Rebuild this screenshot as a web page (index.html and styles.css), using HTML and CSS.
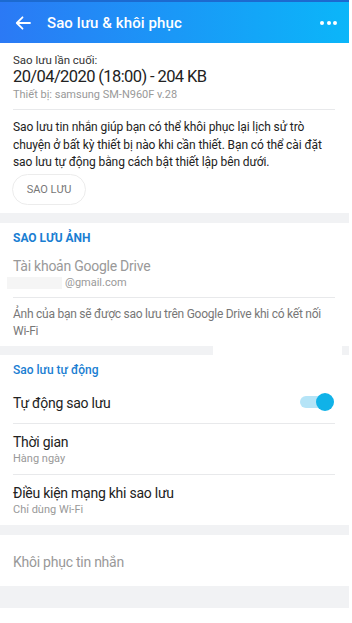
FILE: index.html
```html
<!DOCTYPE html>
<html lang="vi">
<head>
<meta charset="utf-8">
<link rel="stylesheet" href="styles.css">
</head>
<body>
<div class="app">
  <header class="topbar">
    <svg class="back" width="16" height="14" viewBox="0 0 16 14"><path d="M15 7H2M7.5 1.3L1.8 7l5.7 5.7" fill="none" stroke="#fff" stroke-width="1.8" stroke-linecap="round" stroke-linejoin="round"/></svg>
    <div class="title">Sao lưu &amp; khôi phục</div>
    <div class="dots"><span></span><span></span><span></span></div>
  </header>

  <section class="card first">
    <div class="last-label">Sao lưu lần cuối:</div>
    <div class="last-date">20/04/2020 (18:00) - 204 KB</div>
    <div class="device">Thiết bị: samsung SM-N960F v.28</div>
    <div class="divider"></div>
    <p class="intro">Sao lưu tin nhắn giúp bạn có thể khôi phục lại lịch sử trò chuyện ở bất kỳ thiết bị nào khi cần thiết. Bạn có thể cài đặt sao lưu tự động bằng cách bật thiết lập bên dưới.</p>
    <div class="btn">SAO LƯU</div>
  </section>

  <div class="sep"></div>

  <section class="card photos">
    <div class="heading caps">SAO LƯU ẢNH</div>
    <div class="item-title muted">Tài khoản Google Drive</div>
    <div class="item-sub"><span class="mask"></span>@gmail.com</div>
    <div class="divider d2"></div>
    <p class="note">Ảnh của bạn sẽ được sao lưu trên Google Drive khi có kết nối Wi-Fi</p>
  </section>

  <div class="sep sep-patch"></div>

  <section class="card auto">
    <div class="heading">Sao lưu tự động</div>
    <div class="row toggle-row">
      <div class="item-title">Tự động sao lưu</div>
      <div class="switch"><span class="knob"></span></div>
    </div>
    <div class="divider"></div>
    <div class="row stack">
      <div class="item-title">Thời gian</div>
      <div class="item-sub">Hàng ngày</div>
    </div>
    <div class="divider"></div>
    <div class="row stack">
      <div class="item-title">Điều kiện mạng khi sao lưu</div>
      <div class="item-sub">Chỉ dùng Wi-Fi</div>
    </div>
  </section>

  <div class="sep"></div>

  <section class="card restore">
    <div class="item-title muted">Khôi phục tin nhắn</div>
  </section>

  <div class="footer-band"></div>
</div>
</body>
</html>
```

FILE: styles.css
```css
* { box-sizing: border-box; }
html, body { margin: 0; padding: 0; background: #fff; }
body { font-family: Roboto, "Noto Sans", Arial, sans-serif; color: #222; }
.app { width: 349px; min-height: 623px; background: #fff; }

.topbar {
  height: 43px;
  display: flex;
  align-items: center;
  background: linear-gradient(90deg, #2b79f5 0%, #1a98f7 50%, #0bb6f9 100%);
  border-top: 2px solid #1c6ad0;
  padding: 0 12px 0 15px;
}
.back { flex: none; }
.title {
  color: #fff;
  font-size: 15px;
  font-weight: 500;
  margin-left: 16px;
  flex: 1;
  letter-spacing: 0.1px;
}
.dots { display: flex; gap: 2.5px; }
.dots span { width: 4px; height: 4px; border-radius: 50%; background: #fff; display: block; }

.card { padding: 0 14px 0 13px; background: #fff; }
.first { padding-top: 9px; padding-bottom: 8px; }
.last-label { font-size: 11.5px; line-height: 16px; color: #333; }
.last-date { font-size: 16.5px; line-height: 20px; color: #222; margin-top: -1px; letter-spacing: -0.6px; }
.device { font-size: 11px; line-height: 14px; color: #999; margin-top: 1px; }
.divider { height: 1px; background: #e8e9eb; }
.first .divider { margin-top: 7px; }
.intro { margin: 9px 0 0; font-size: 12px; line-height: 17.5px; color: #222; letter-spacing: -0.1px; }
.btn {
  width: 74px;
  height: 31px;
  margin-top: 2px;
  margin-left: -1px;
  border: 1px solid #ececec;
  border-radius: 16px;
  display: flex;
  align-items: center;
  justify-content: center;
  font-size: 11px;
  color: #777;
}

.sep { height: 10px; background: #f1f2f4; }
.sep-patch {
  height: 9px;
  background: linear-gradient(90deg, #f1f2f4 0, #f1f2f4 213px, #fff 213px, #fff 342px, #f1f2f4 342px);
}

.photos { padding-top: 7px; padding-bottom: 6px; }
.heading { font-size: 12px; line-height: 16px; color: #1a7ed2; font-weight: 500; }
.heading.caps { font-weight: 700; }
.item-title { font-size: 14px; line-height: 20px; color: #222; letter-spacing: -0.25px; }
.item-title.muted { color: #999; }
.photos .item-title { margin-top: 10px; }
.item-sub { font-size: 11px; line-height: 14px; color: #999; display: flex; align-items: center; }
.mask { display: inline-block; width: 55px; height: 12px; background: #f5f5f5; margin-left: -6px; margin-right: 3px; }
.d2 { margin-top: 7px; }
.note { margin: 8px 0 0; font-size: 12px; line-height: 17px; color: #777; letter-spacing: -0.25px; }

.auto { padding-top: 7px; padding-bottom: 8px; }
.row.toggle-row {
  display: flex;
  align-items: center;
  justify-content: space-between;
  padding: 15px 0 10px;
}
.switch {
  width: 33px;
  height: 12px;
  border-radius: 6px;
  background: #b5e4f7;
  position: relative;
  margin-right: 2px;
  margin-top: -2px;
}
.knob {
  position: absolute;
  right: -1px;
  top: -3px;
  width: 18px;
  height: 18px;
  border-radius: 50%;
  background: #10b2e8;
}
.row.stack { padding: 8px 0; }
.row.stack:last-child { padding-bottom: 0; }
.row.stack:nth-of-type(2) { padding-top: 9px; }

.restore { padding-top: 17px; padding-bottom: 14px; }
.footer-band { height: 22px; background: #f1f2f4; }
```
